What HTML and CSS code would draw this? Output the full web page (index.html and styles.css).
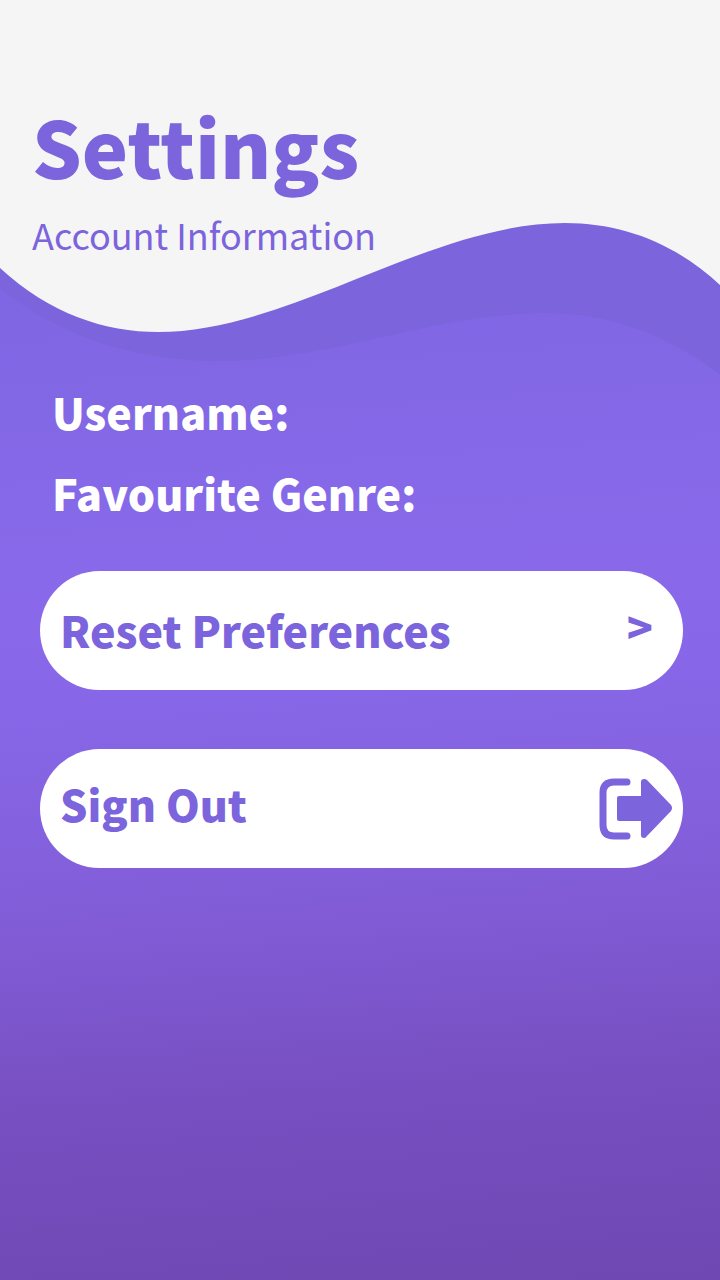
FILE: index.html
```html
<!DOCTYPE html>
<html lang="en">
<head>
<meta charset="utf-8">
<meta name="viewport" content="width=device-width, initial-scale=1">
<title>Settings</title>
<link rel="stylesheet" href="styles.css">
</head>
<body>
<div class="screen">
  <svg class="waves" viewBox="0 0 720 400" preserveAspectRatio="none" aria-hidden="true">
    <path class="wave-back" d="M0 0H720V375C668 333 606 313 546 313C436 313 330 361 218 361C130 361 55 333 0 288Z"/>
    <path class="wave-front" d="M0 0H720V285C677 245 625 223 565 223C430 223 290 332 158 332C105 332 50 314 0 268Z"/>
  </svg>
  <header class="header">
    <h1 class="title">Settings</h1>
    <p class="subtitle">Account Information</p>
  </header>
  <main class="content">
    <div class="details">
      <p class="detail">Username:</p>
      <p class="detail">Favourite Genre:</p>
    </div>
    <div class="actions">
      <button class="action" type="button">
        <span class="label">Reset Preferences</span>
        <span class="label raised chevron" aria-hidden="true">&gt;</span>
      </button>
      <button class="action" type="button">
        <span class="label raised">Sign Out</span>
        <svg class="exit-icon" viewBox="0 0 74 62" aria-hidden="true">
          <path class="exit-frame" d="M28 4H15Q4 4 4 15V47Q4 58 15 58H28"/>
          <path class="exit-arrow" d="M18 20Q18 18 20 18H42V4Q42 1 45 1Q47 1 48 2L72 27Q74 30 72 33L48 58Q47 60 45 60Q42 60 42 57V43H20Q18 43 18 41Z"/>
        </svg>
      </button>
    </div>
  </main>
</div>
</body>
</html>
```
FILE: styles.css
```css
* { box-sizing: border-box; }

body {
  margin: 0;
  font-family: "Noto Sans CJK SC", "Noto Sans", sans-serif;
  color: #7b64dc;
}

h1, p { margin: 0; }

.screen {
  position: relative;
  min-height: 100vh;
  background: linear-gradient(176deg, #7b64e0 0%, #7f66e3 23%, #8669e8 38%, #8969e9 46%, #8767e7 54%, #825dd8 69%, #774fc1 84%, #6f48b3 100%);
}

.waves {
  position: absolute;
  top: 0;
  left: 0;
  width: 100%;
  height: 400px;
}

.wave-back { fill: #7b64dc; }
.wave-front { fill: #f5f5f5; }

.header {
  position: relative;
  padding: 84px 32px 0;
}

.title {
  font-size: 78px;
  line-height: 122px;
  font-weight: 900;
}

.subtitle {
  padding-top: 2px;
  font-size: 36px;
  line-height: 52px;
}

.content {
  position: relative;
  padding: 111px 37px 40px 40px;
}

.details {
  padding-left: 12px;
  color: #fff;
}

.detail,
.label {
  font-size: 43px;
  font-weight: 900;
}

.detail { line-height: 81px; }

.actions {
  display: flex;
  flex-direction: column;
  gap: 59px;
  margin-top: 38px;
}

.action {
  display: flex;
  align-items: center;
  justify-content: space-between;
  min-height: 119px;
  padding: 0 10px 0 20px;
  border: 0;
  border-radius: 60px;
  background: #fff;
  color: inherit;
  font: inherit;
  text-align: left;
  cursor: pointer;
}

.label {
  padding-bottom: 4px;
  line-height: 64px;
}

.raised { padding-bottom: 12px; }

.chevron { padding-right: 20px; }

.exit-icon {
  width: 74px;
  height: 62px;
}

.exit-frame {
  fill: none;
  stroke: #7b64dc;
  stroke-width: 7px;
  stroke-linecap: round;
}

.exit-arrow { fill: #7b64dc; }
```
